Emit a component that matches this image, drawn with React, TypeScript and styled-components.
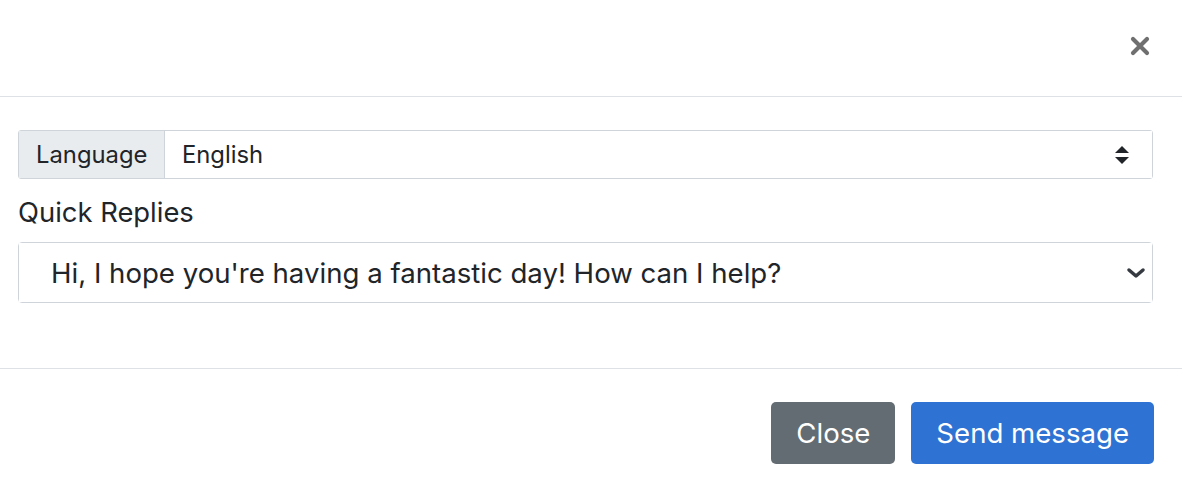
import React from "react";
import styled, { createGlobalStyle } from "styled-components";

const Global = createGlobalStyle`
  html, body { margin: 0; padding: 0; background: #fff; }
  body { font-family: Inter, "Noto Sans", sans-serif; color: #212529; }
  * { box-sizing: border-box; }
`;

const Modal = styled.div`
  width: 1182px;
  height: 488px;
  display: flex;
  flex-direction: column;
  background: #fff;
`;

const Header = styled.div`
  height: 97px;
  border-bottom: 1.5px solid #dee2e6;
  display: flex;
  align-items: center;
  justify-content: flex-end;
  padding: 0 32px 4px 0;
`;

const CloseX = styled.button`
  border: none;
  background: transparent;
  padding: 0;
  width: 20px;
  height: 20px;
  display: flex;
  cursor: pointer;
`;

const Body = styled.div`
  padding: 33px 29px 0 18px;
  height: 272px;
  border-bottom: 1.5px solid #dee2e6;
`;

const InputGroup = styled.div`
  display: flex;
  height: 49px;
  border: 1.5px solid #ced4da;
  border-radius: 3px;
  margin-bottom: 13px;
`;

const Addon = styled.div`
  display: flex;
  align-items: center;
  padding: 0 17px;
  background: #e9ecef;
  border-right: 1.5px solid #ced4da;
  font-size: 23.8px;
  width: 146px;
`;

const SelectBox = styled.div<{ $size: number; $pad: number; $right: number }>`
  flex: 1;
  display: flex;
  align-items: center;
  justify-content: space-between;
  padding: 0 ${(p) => p.$right}px 0 ${(p) => p.$pad}px;
  font-size: ${(p) => p.$size}px;
  background: #fff;
  white-space: nowrap;
`;

const Label = styled.div`
  font-size: 27.4px;
  line-height: 40px;
  margin-bottom: 10px;
`;

const FullSelect = styled.div`
  height: 61px;
  border: 1.5px solid #ced4da;
  border-radius: 4px;
  display: flex;
`;

const Footer = styled.div`
  flex: 1;
  display: flex;
  justify-content: flex-end;
  align-items: flex-start;
  gap: 16px;
  padding: 33px 28px 0 0;
`;

const Button = styled.button<{ $variant: "secondary" | "primary" }>`
  height: 62px;
  border: none;
  border-radius: 5px;
  font-family: Inter, "Noto Sans", sans-serif;
  font-size: 27.6px;
  color: #fff;
  padding: 0 25px;
  background: ${(p) => (p.$variant === "primary" ? "#2e72d3" : "#636c72")};
`;

export default function App() {
  return (
    <Modal>
      <Global />
      <Header>
        <CloseX aria-label="Close">
          <svg width="20" height="20" viewBox="0 0 20 20" fill="none" stroke="#6f6f6f" strokeWidth="4.2" strokeLinecap="round">
            <path d="M3 3 L17 17 M17 3 L3 17" />
          </svg>
        </CloseX>
      </Header>
      <Body>
        <InputGroup>
          <Addon>Language</Addon>
          <SelectBox $size={23.8} $pad={17} $right={22}>
            <span>English</span>
            <svg width="16" height="20" viewBox="0 0 16 20" fill="#212529">
              <path d="M8 1 L15 8 H1 Z" />
              <path d="M8 19 L15 12 H1 Z" />
            </svg>
          </SelectBox>
        </InputGroup>
        <Label>Quick Replies</Label>
        <FullSelect>
          <SelectBox $size={27.6} $pad={32} $right={6}>
            <span>Hi, I hope you're having a fantastic day! How can I help?</span>
            <svg width="20" height="12" viewBox="0 0 20 12" fill="none" stroke="#343a40" strokeWidth="3.5" strokeLinecap="round" strokeLinejoin="round">
              <path d="M3 3 L10 9 L17 3" />
            </svg>
          </SelectBox>
        </FullSelect>
      </Body>
      <Footer>
        <Button $variant="secondary">Close</Button>
        <Button $variant="primary">Send message</Button>
      </Footer>
    </Modal>
  );
}
